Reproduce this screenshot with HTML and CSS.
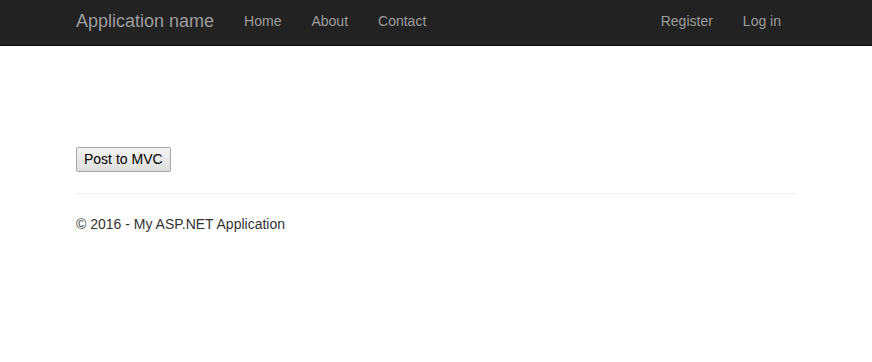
FILE: index.html
```html
<!DOCTYPE html>
<html lang="en">
<head>
  <meta charset="UTF-8">
  <meta name="viewport" content="width=device-width, initial-scale=1.0">
  <title>Home Page - My ASP.NET Application</title>
  <link rel="stylesheet" href="styles.css">
</head>
<body>
  <div class="navbar">
    <div class="container nav-inner">
      <a class="navbar-brand" href="#">Application name</a>
      <ul class="nav">
        <li><a href="#">Home</a></li>
        <li><a href="#">About</a></li>
        <li><a href="#">Contact</a></li>
      </ul>
      <ul class="nav nav-right">
        <li><a href="#">Register</a></li>
        <li><a href="#">Log in</a></li>
      </ul>
    </div>
  </div>
  <div class="container body-content">
    <form class="post-form">
      <button type="button" class="post-btn">Post to MVC</button>
    </form>
    <hr>
    <footer>
      <p>&copy; 2016 - My ASP.NET Application</p>
    </footer>
  </div>
</body>
</html>
```

FILE: styles.css
```css
body {
  margin: 0;
  font-family: "Liberation Sans", Arial, sans-serif;
  font-size: 14px;
  line-height: 20px;
  color: #333333;
  background-color: #ffffff;
}

.container {
  width: 750px;
  margin: 0 auto;
  padding: 0 15px;
  box-sizing: border-box;
}

.navbar {
  background-color: #222222;
  border-bottom: 1px solid #080808;
  height: 45px;
}

.nav-inner {
  display: flex;
  align-items: flex-start;
}

.navbar-brand {
  margin-left: -15px;
  padding: 11px 15px 14px;
  font-size: 18px;
  line-height: 20px;
  color: #9d9d9d;
  text-decoration: none;
}

.nav {
  display: flex;
  list-style: none;
  margin: 0;
  padding: 0;
}

.nav a {
  display: block;
  padding: 11px 15px 14px;
  line-height: 20px;
  color: #9d9d9d;
  text-decoration: none;
}

.nav-right {
  margin-left: auto;
}

.body-content {
  padding-top: 101px;
}

.post-form {
  margin: 0;
}

.post-btn {
  font-family: "Liberation Sans", Arial, sans-serif;
  font-size: 14px;
  line-height: 19px;
  padding: 2px 7px;
  color: #000000;
  background: linear-gradient(#f4f4f4, #dedede);
  border: 1px solid #a6a6a6;
  border-radius: 2px;
}

hr {
  margin: 21px 0 20px;
  border: 0;
  border-top: 1px solid #eeeeee;
}

footer p {
  margin: 0 0 10px;
}
```
